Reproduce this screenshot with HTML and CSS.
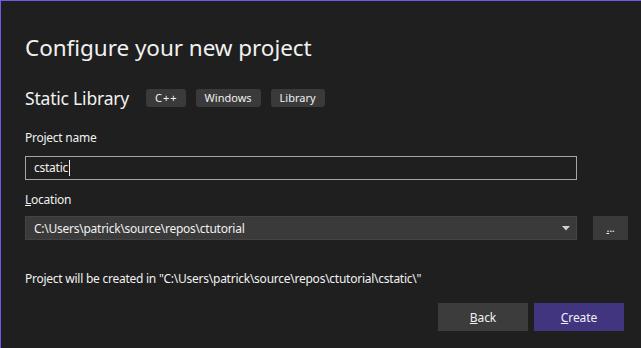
FILE: index.html
```html
<!DOCTYPE html>
<html lang="en">
<head>
    <meta charset="UTF-8">
    <title>Configure your new project</title>
    <link rel="stylesheet" href="styles.css">
</head>
<body>
<div class="window">
    <h1 class="title">Configure your new project</h1>

    <div class="template">
        <span class="template-name">Static Library</span>
        <span class="tag tag-cpp">C++</span>
        <span class="tag">Windows</span>
        <span class="tag">Library</span>
    </div>

    <label class="field-label">Project name</label>
    <div class="text-input">cstatic<span class="caret"></span></div>

    <label class="field-label"><u>L</u>ocation</label>
    <div class="location-row">
        <div class="combo">
            <span>C:\Users\patrick\source\repos\ctutorial</span>
            <svg class="combo-arrow" width="8" height="5" viewBox="0 0 8 5">
                <path d="M0 0h8L4 4.5z" fill="#d0d0d0"/>
            </svg>
        </div>
        <div class="browse"><u>.</u>..</div>
    </div>

    <p class="summary">Project will be created in "C:\Users\patrick\source\repos\ctutorial\cstatic\"</p>

    <div class="actions">
        <button class="btn btn-back"><u>B</u>ack</button>
        <button class="btn btn-create"><u>C</u>reate</button>
    </div>
</div>
</body>
</html>
```

FILE: styles.css
```css
:root {
    --accent: #6c5ce7;
    --bg: #1f1f1f;
    --text: #f1f1f1;
    --control: #3a3a3a;
    --primary: #42357f;
    --font-body: "Noto Sans", "Open Sans", sans-serif;
}

* {
    box-sizing: border-box;
    margin: 0;
    padding: 0;
}

body {
    background-color: var(--bg);
    color: var(--text);
    font-family: var(--font-body);
    font-size: 12px;
    letter-spacing: -0.25px;
}

.window {
    height: 348px;
    border-top: 1px solid var(--accent);
    border-left: 1px solid var(--accent);
    padding: 0 13px 0 24px;
    display: flex;
    flex-direction: column;
}

.title {
    font-size: 22.5px;
    font-weight: 400;
    line-height: 30px;
    margin-top: 32px;
    letter-spacing: -0.05px;
}

.template {
    display: flex;
    align-items: center;
    margin-top: 26px;
    height: 18px;
}

.template-name {
    font-size: 17.5px;
    margin-right: 17px;
    letter-spacing: -0.2px;
}

.tag {
    background-color: var(--control);
    border-radius: 3px;
    height: 18px;
    line-height: 17px;
    padding: 0 9px;
    font-size: 11px;
    letter-spacing: 0;
    margin-right: 10px;
}

.tag-cpp {
    letter-spacing: 1px;
    padding: 0 8px 0 9px;
}

.field-label {
    display: block;
    line-height: 16px;
    margin-top: 12px;
}

.template + .field-label {
    margin-top: 23px;
}

.text-input {
    width: calc(100% - 51px);
    height: 24px;
    margin-top: 10px;
    border: 1px solid #a6a6a6;
    padding-left: 8px;
    line-height: 22px;
    display: flex;
    align-items: center;
}

.caret {
    display: inline-block;
    width: 1px;
    height: 16px;
    background-color: var(--text);
    margin-left: 1px;
}

.location-row {
    display: flex;
    gap: 16px;
    margin-top: 8px;
}

.combo {
    flex: 1;
    height: 24px;
    background-color: var(--control);
    border: 1px solid #444444;
    padding: 0 6px 0 8px;
    display: flex;
    align-items: center;
    justify-content: space-between;
}

.browse {
    width: 35px;
    height: 24px;
    background-color: var(--control);
    text-align: center;
    line-height: 24px;
    font-size: 11px;
}

.summary {
    margin-top: 31px;
    line-height: 16px;
}

.actions {
    display: flex;
    justify-content: flex-end;
    gap: 6px;
    margin-top: 16px;
    padding-right: 4px;
}

.btn {
    width: 90px;
    height: 28px;
    border: none;
    color: var(--text);
    font-family: var(--font-body);
    font-size: 12px;
    letter-spacing: -0.1px;
}

.btn-back {
    background-color: #3c3c3c;
}

.btn-create {
    background-color: var(--primary);
}
```
